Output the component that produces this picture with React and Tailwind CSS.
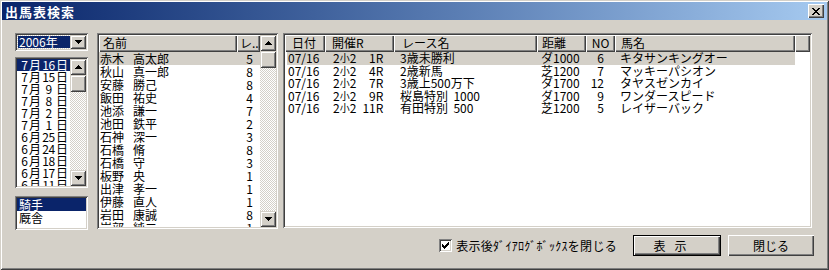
import React from 'react';

const sunken =
  'shadow-[inset_1px_1px_0_#808080,inset_-1px_-1px_0_#ffffff,inset_2px_2px_0_#404040,inset_-2px_-2px_0_#d4d0c8] p-[2px]';
const raised =
  'shadow-[inset_1px_1px_0_#ffffff,inset_-1px_-1px_0_#404040,inset_-2px_-2px_0_#808080]';
const raisedSb =
  'shadow-[inset_1px_1px_0_#d4d0c8,inset_-1px_-1px_0_#404040,inset_2px_2px_0_#ffffff,inset_-2px_-2px_0_#808080]';

const dates = [
  ['7', '16'], ['7', '15'], ['7', '9'], ['7', '8'], ['7', '2'], ['7', '1'],
  ['6', '25'], ['6', '24'], ['6', '18'], ['6', '17'], ['6', '11'], ['6', '10'],
];

const jockeys = [
  ['赤木', '高太郎', 5], ['秋山', '真一郎', 8], ['安藤', '勝己', 8], ['飯田', '祐史', 4],
  ['池添', '謙一', 7], ['池田', '鉄平', 2], ['石神', '深一', 3], ['石橋', '脩', 8],
  ['石橋', '守', 3], ['板野', '央', 1], ['出津', '孝一', 1], ['伊藤', '直人', 1],
  ['岩田', '康誠', 8], ['岩部', '純二', 1],
];

const races = [
  { date: '07/16', r: '1R', name: '3歳未勝利', dist: 'ダ1000', no: 6, horse: 'キタサンキングオー' },
  { date: '07/16', r: '4R', name: '2歳新馬', dist: '芝1200', no: 7, horse: 'マッキーパシオン' },
  { date: '07/16', r: '7R', name: '3歳上500万下', dist: 'ダ1700', no: 12, horse: 'タヤスゼンカイ' },
  { date: '07/16', r: '9R', name: '桜島特別  1000', dist: 'ダ1700', no: 9, horse: 'ワンダースピード' },
  { date: '07/16', r: '11R', name: '有田特別  500', dist: '芝1200', no: 5, horse: 'レイザーバック' },
];

const ArrowUp = () => (
  <svg width="7" height="4" viewBox="0 0 7 4" shapeRendering="crispEdges">
    <path d="M3 0h1v1h1v1h1v1h1v1H0V3h1V2h1V1h1z" fill="#000" />
  </svg>
);

const ArrowDown = () => (
  <svg width="7" height="4" viewBox="0 0 7 4" shapeRendering="crispEdges">
    <path d="M0 0h7v1H6v1H5v1H4v1H3V3H2V2H1V1H0z" fill="#000" />
  </svg>
);

const ScrollBar = () => (
  <div className="flex w-[16px] shrink-0 flex-col self-stretch">
    <div className={`flex h-[16px] items-center justify-center bg-[#d4d0c8] ${raisedSb}`}>
      <ArrowUp />
    </div>
    <div className="flex-1 bg-[conic-gradient(#d4d0c8_25%,#ffffff_0_50%,#d4d0c8_0_75%,#ffffff_0)] bg-[length:2px_2px]">
      <div className={`h-[17px] bg-[#d4d0c8] ${raisedSb}`} />
    </div>
    <div className={`flex h-[16px] items-center justify-center bg-[#d4d0c8] ${raisedSb}`}>
      <ArrowDown />
    </div>
  </div>
);

const HeaderCell = ({ className = '', children }) => (
  <div className={`h-[17px] shrink-0 overflow-hidden whitespace-nowrap bg-[#d4d0c8] leading-[16px] ${raised} ${className}`}>
    {children}
  </div>
);

export default function App() {
  return (
    <div className="h-[270px] w-[829px] overflow-hidden bg-[#d4d0c8] p-[2px] font-['Noto_Sans_CJK_JP','Noto_Sans_CJK_SC',sans-serif] text-[12px] text-black shadow-[inset_1px_1px_0_#d4d0c8,inset_-1px_-1px_0_#404040,inset_2px_2px_0_#ffffff,inset_-2px_-2px_0_#808080]">
      {/* title bar */}
      <div className="flex h-[18px] items-center justify-between bg-gradient-to-r from-[#0a246a] to-[#a6caf0] pl-[3px] pr-[3px]">
        <span className="text-[13px] font-bold leading-none tracking-[1px] text-white">出馬表検索</span>
        <div className={`flex h-[14px] w-[16px] items-center justify-center bg-[#d4d0c8] ${raised}`}>
          <svg width="8" height="7" viewBox="0 0 8 7" shapeRendering="crispEdges">
            <path d="M0 0h2v1h1v1h2V1h1V0h2v1H7v1H6v1H5v1h1v1h1v1h1v1H6V6H5V5H3v1H2v1H0V6h1V5h1V4h1V3H2V2H1V1H0z" fill="#000" />
          </svg>
        </div>
      </div>

      <div className="flex pl-[13px] pt-[13px]">
        {/* left column */}
        <div className="flex w-[73px] shrink-0 flex-col">
          <div className={`flex h-[18px] bg-white ${sunken}`}>
            <div className="flex flex-1 items-center pl-[1px]">
              <div className="h-[12px] w-[52px] bg-[#0a246a] pl-[1px] leading-[12px] text-white outline-1 outline-dotted outline-[#d4d0c8]">
                2006年
              </div>
            </div>
            <div className={`flex w-[16px] items-center justify-center bg-[#d4d0c8] ${raisedSb}`}>
              <ArrowDown />
            </div>
          </div>

          <div className={`mt-[6px] flex h-[131px] bg-white ${sunken}`}>
            <div className="flex-1 overflow-hidden">
              {dates.map(([m, d], i) => (
                <div
                  key={i}
                  className={`flex h-[12px] items-center leading-[12px] ${i === 0 ? 'bg-[#0a246a] text-white' : ''}`}
                >
                  <span className="w-[11px] text-right">{m}</span>
                  <span className="ml-[1px]">月</span>
                  <span className="w-[15px] text-center tracking-[-0.5px]">{d}</span>
                  <span>日</span>
                </div>
              ))}
            </div>
            <ScrollBar />
          </div>

          <div className={`mt-[8px] h-[34px] bg-white ${sunken}`}>
            <div className="h-[13px] bg-[#0a246a] pl-[2px] leading-[13px] text-white">騎手</div>
            <div className="h-[13px] pl-[2px] leading-[13px]">厩舎</div>
          </div>
        </div>

        {/* jockey list */}
        <div className={`ml-[9px] flex h-[196px] w-[181px] shrink-0 bg-white ${sunken}`}>
          <div className="flex flex-1 flex-col overflow-hidden">
            <div className="flex">
              <HeaderCell className="w-[138px] pl-[4px]">名前</HeaderCell>
              <HeaderCell className="flex-1 shrink pl-[3px]">レ...</HeaderCell>
            </div>
            {jockeys.map(([fam, giv, n], i) => (
              <div
                key={i}
                className={`flex h-[13px] shrink-0 items-center leading-[13px] ${i === 0 ? 'bg-[#d4d0c8]' : ''}`}
              >
                <span className="w-[34px] shrink-0 pl-[1px]">{fam}</span>
                <span className="w-[103px] shrink-0">{giv}</span>
                <span className="w-[17px] shrink-0 text-right">{n}</span>
              </div>
            ))}
          </div>
          <ScrollBar />
        </div>

        {/* race list */}
        <div className={`ml-[5px] h-[195px] w-[529px] shrink-0 overflow-hidden bg-white ${sunken}`}>
          <div className="flex">
            <HeaderCell className="w-[40px] pl-[7px]">日付</HeaderCell>
            <HeaderCell className="w-[69px] pl-[7px]">開催R</HeaderCell>
            <HeaderCell className="w-[143px] pl-[8px]">レース名</HeaderCell>
            <HeaderCell className="w-[49px] pl-[5px]">距離</HeaderCell>
            <HeaderCell className="w-[29px] text-center">NO</HeaderCell>
            <HeaderCell className="w-[180px] pl-[6px]">馬名</HeaderCell>
            <HeaderCell className="flex-1 shrink" />
          </div>
          {races.map((r, i) => (
            <div
              key={i}
              className={`ml-[2px] flex h-[12.5px] w-[508px] items-center whitespace-pre leading-[12px] ${i === 0 ? 'bg-[#d4d0c8]' : ''}`}
            >
              <span className="w-[38px] shrink-0 pl-[1px]">{r.date}</span>
              <span className="flex w-[69px] shrink-0 pl-[8px]">
                <span>2</span>
                <span className="text-[10px]">小</span>
                <span>2</span>
                <span className="w-[27px] text-right">{r.r}</span>
              </span>
              <span className="w-[143px] shrink-0 pl-[6px]">{r.name}</span>
              <span className="w-[49px] shrink-0 pl-[4px]">{r.dist}</span>
              <span className="w-[29px] shrink-0 pr-[11px] text-right">{r.no}</span>
              <span className="w-[180px] shrink-0 pl-[5px]">{r.horse}</span>
            </div>
          ))}
        </div>
      </div>

      {/* bottom row */}
      <div className="mt-[5px] flex items-center justify-end pr-[13px]">
        <div className={`flex h-[13px] w-[13px] items-center justify-center bg-white ${sunken}`}>
          <svg width="7" height="7" viewBox="0 0 7 7" shapeRendering="crispEdges">
            <path d="M6 0h1v3H6v1H5v1H4v1H3v1H2V6H1V5H0V2h1v1h1v1h1V3h1V2h1V1h1z" fill="#000" />
          </svg>
        </div>
        <span className="ml-[4px] whitespace-nowrap leading-[13px] tracking-[0.3px]">表示後ﾀﾞｲｱﾛｸﾞﾎﾞｯｸｽを閉じる</span>
        <div className="ml-[16px] h-[21px] w-[88px] border border-black">
          <div className={`flex h-full items-center justify-center gap-[9px] bg-[#d4d0c8] pr-[14px] ${raised}`}>
            <span>表</span>
            <span>示</span>
          </div>
        </div>
        <div className={`ml-[7px] flex h-[21px] w-[86px] items-center justify-center bg-[#d4d0c8] ${raised}`}>
          閉じる
        </div>
      </div>
    </div>
  );
}
